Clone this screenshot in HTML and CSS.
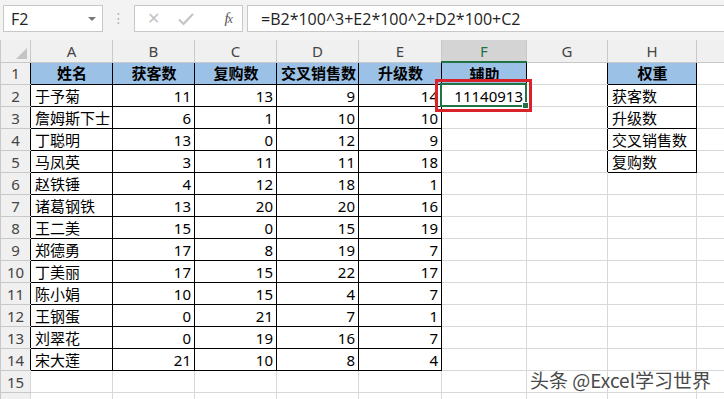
FILE: index.html
```html
<!DOCTYPE html>
<html>

<head>
    <meta charset="utf-8">
    <title>Sheet</title>
    <link rel="stylesheet" href="styles.css">
</head>

<body>
    <div class="bar">
        <div class="namebox"><span>F2</span><span class="drop"></span></div>
        <div class="dots">&#8942;</div>
        <div class="btns">
            <span class="x">&#x2715;</span>
            <svg class="ok" width="16" height="14" viewBox="0 0 16 14"><path d="M1 7.5 L5.5 12 L15 2" fill="none" stroke="#c4c4c4" stroke-width="2.2"/></svg>
            <span class="fx">f<i>x</i></span>
        </div>
        <div class="formula">=B2*100^3+E2*100^2+D2*100+C2</div>
    </div>

    <table class="sheet">
        <colgroup>
            <col style="width:30px"><col style="width:82px"><col style="width:82px"><col style="width:82px">
            <col style="width:82px"><col style="width:83px"><col style="width:85px"><col style="width:81px">
            <col style="width:89px"><col style="width:40px">
        </colgroup>
        <tr class="hd">
            <th class="corner"><span class="tri"></span></th>
            <th>A</th><th>B</th><th>C</th><th>D</th><th>E</th><th class="on">F</th><th>G</th><th>H</th><th></th>
        </tr>
        <tr>
            <th class="rh">1</th>
            <td class="b t">姓名</td><td class="b t">获客数</td><td class="b t">复购数</td><td class="b t">交叉销售数</td>
            <td class="b t">升级数</td><td class="b t">辅助</td><td class="g"></td><td class="b t">权重</td><td></td>
        </tr>
        <tr>
            <th class="rh">2</th>
            <td class="b">于予菊</td><td class="b n">11</td><td class="b n">13</td><td class="b n">9</td><td class="b n">14</td>
            <td class="b n">11140913</td><td class="g"></td><td class="b">获客数</td><td></td>
        </tr>
        <tr>
            <th class="rh">3</th>
            <td class="b">詹姆斯下士</td><td class="b n">6</td><td class="b n">1</td><td class="b n">10</td><td class="b n">10</td>
            <td></td><td class="g"></td><td class="b">升级数</td><td></td>
        </tr>
        <tr>
            <th class="rh">4</th>
            <td class="b">丁聪明</td><td class="b n">13</td><td class="b n">0</td><td class="b n">12</td><td class="b n">9</td>
            <td></td><td class="g"></td><td class="b">交叉销售数</td><td></td>
        </tr>
        <tr>
            <th class="rh">5</th>
            <td class="b">马凤英</td><td class="b n">3</td><td class="b n">11</td><td class="b n">11</td><td class="b n">18</td>
            <td></td><td class="g"></td><td class="b">复购数</td><td></td>
        </tr>
        <tr>
            <th class="rh">6</th>
            <td class="b">赵铁锤</td><td class="b n">4</td><td class="b n">12</td><td class="b n">18</td><td class="b n">1</td>
            <td></td><td></td><td></td><td></td>
        </tr>
        <tr>
            <th class="rh">7</th>
            <td class="b">诸葛钢铁</td><td class="b n">13</td><td class="b n">20</td><td class="b n">20</td><td class="b n">16</td>
            <td></td><td></td><td></td><td></td>
        </tr>
        <tr>
            <th class="rh">8</th>
            <td class="b">王二美</td><td class="b n">15</td><td class="b n">0</td><td class="b n">15</td><td class="b n">19</td>
            <td></td><td></td><td></td><td></td>
        </tr>
        <tr>
            <th class="rh">9</th>
            <td class="b">郑德勇</td><td class="b n">17</td><td class="b n">8</td><td class="b n">19</td><td class="b n">7</td>
            <td></td><td></td><td></td><td></td>
        </tr>
        <tr>
            <th class="rh">10</th>
            <td class="b">丁美丽</td><td class="b n">17</td><td class="b n">15</td><td class="b n">22</td><td class="b n">17</td>
            <td></td><td></td><td></td><td></td>
        </tr>
        <tr>
            <th class="rh">11</th>
            <td class="b">陈小娟</td><td class="b n">10</td><td class="b n">15</td><td class="b n">4</td><td class="b n">7</td>
            <td></td><td></td><td></td><td></td>
        </tr>
        <tr>
            <th class="rh">12</th>
            <td class="b">王钢蛋</td><td class="b n">0</td><td class="b n">21</td><td class="b n">7</td><td class="b n">1</td>
            <td></td><td></td><td></td><td></td>
        </tr>
        <tr>
            <th class="rh">13</th>
            <td class="b">刘翠花</td><td class="b n">0</td><td class="b n">19</td><td class="b n">16</td><td class="b n">7</td>
            <td></td><td></td><td></td><td></td>
        </tr>
        <tr>
            <th class="rh">14</th>
            <td class="b">宋大莲</td><td class="b n">21</td><td class="b n">10</td><td class="b n">8</td><td class="b n">4</td>
            <td></td><td></td><td></td><td></td>
        </tr>
        <tr>
            <th class="rh">15</th>
            <td></td><td></td><td></td><td></td><td></td><td></td><td></td><td></td><td></td>
        </tr>
        <tr>
            <th class="rh">16</th>
            <td></td><td></td><td></td><td></td><td></td><td></td><td></td><td></td><td></td>
        </tr>
    </table>

    <!-- selection and highlight overlays -->
    <div class="sel"><span class="handle"></span></div>
    <div class="mark"></div>
    <div class="wm">头条 @Excel学习世界</div>
</body>

</html>
```

FILE: styles.css
```css
body {
    margin: 0;
    width: 724px;
    height: 399px;
    overflow: hidden;
    position: relative;
    background-color: #fff;
    font-family: "Noto Sans CJK SC", sans-serif;
}

.bar {
    height: 40px;
    box-sizing: border-box;
    padding: 5px 0 0 3px;
    display: flex;
    align-items: flex-start;
    background-color: #f3f3f3;
}

.namebox,
.btns,
.formula {
    height: 27px;
    box-sizing: border-box;
    border: 1px solid #c8c8c8;
    background-color: #fff;
    display: flex;
    align-items: center;
}

.namebox {
    width: 100px;
    padding: 0 6px 0 7px;
    justify-content: space-between;
    font: 16px "Open Sans", sans-serif;
    color: #222;
}

.drop {
    border-left: 4px solid transparent;
    border-right: 4px solid transparent;
    border-top: 4px solid #777;
}

.dots {
    width: 31px;
    text-align: center;
    color: #b0b0b0;
    font: 14px "DejaVu Sans", sans-serif;
    line-height: 27px;
}

.btns {
    width: 109px;
    padding: 0 0 0 12px;
    gap: 16px;
}

.x {
    color: #c4c4c4;
    font: 16px "DejaVu Sans", sans-serif;
}

.ok {
    margin-left: 2px;
}

.fx {
    margin-left: 14px;
    font: italic 15px "Liberation Serif", serif;
    color: #555;
    letter-spacing: -1px;
}

.fx i {
    font-size: 12px;
}

.formula {
    margin-left: 4px;
    flex: 1;
    padding-left: 13px;
    border-right: none;
    font: 16px "Open Sans", sans-serif;
    color: #222;
}

.sheet {
    border-collapse: collapse;
    table-layout: fixed;
    width: 736px;
}

.sheet tr {
    height: 22px;
}

.sheet td,
.sheet th {
    height: 21px;
    padding: 0 3px;
    border: 1px solid #d8d8d8;
    font-size: 15px;
    line-height: 20px;
    white-space: nowrap;
    overflow: hidden;
}

.sheet .hd th {
    background-color: #f0f0f0;
    border: 1px solid #c8c8c8;
    border-top: none;
    font-family: "Noto Sans", sans-serif;
    font-weight: normal;
    color: #444;
    text-align: center;
}

.sheet .hd .on {
    background-color: #d4d4d4;
    color: #217346;
    border-bottom: 2px solid #217346;
}

.corner {
    position: relative;
}

.tri {
    position: absolute;
    right: 3px;
    bottom: 3px;
    border-left: 11px solid transparent;
    border-bottom: 11px solid #c4c4c4;
}

.sheet .rh {
    background-color: #f0f0f0;
    border-color: #c8c8c8;
    border-right-style: none;
    font-family: "Noto Sans", sans-serif;
    font-weight: normal;
    color: #444;
    text-align: center;
    padding: 0;
}

.sheet td.b {
    border: 1px solid #000;
    color: #000;
    padding-left: 4px;
}

.sheet td.t {
    background-color: #9bc2e6;
    font-weight: bold;
    text-align: center;
}

.sheet td.n {
    text-align: right;
    font-family: "Noto Sans", sans-serif;
    padding-right: 3px;
}

.sheet td.g {
    border-right-style: none;
}

.sel {
    position: absolute;
    left: 440px;
    top: 83px;
    width: 83px;
    height: 20px;
    border: 2px solid #217346;
}

.handle {
    position: absolute;
    right: -4px;
    bottom: -4px;
    width: 5px;
    height: 5px;
    background-color: #217346;
    border: 1px solid #fff;
}

.mark {
    position: absolute;
    left: 435px;
    top: 79px;
    width: 91px;
    height: 27px;
    border: 3px solid #d8232a;
}

.wm {
    position: absolute;
    left: 530px;
    top: 366px;
    font-size: 19px;
    color: #4a4a4a;
    text-shadow: 0 0 2px #fff, 0 0 2px #fff;
}
```
